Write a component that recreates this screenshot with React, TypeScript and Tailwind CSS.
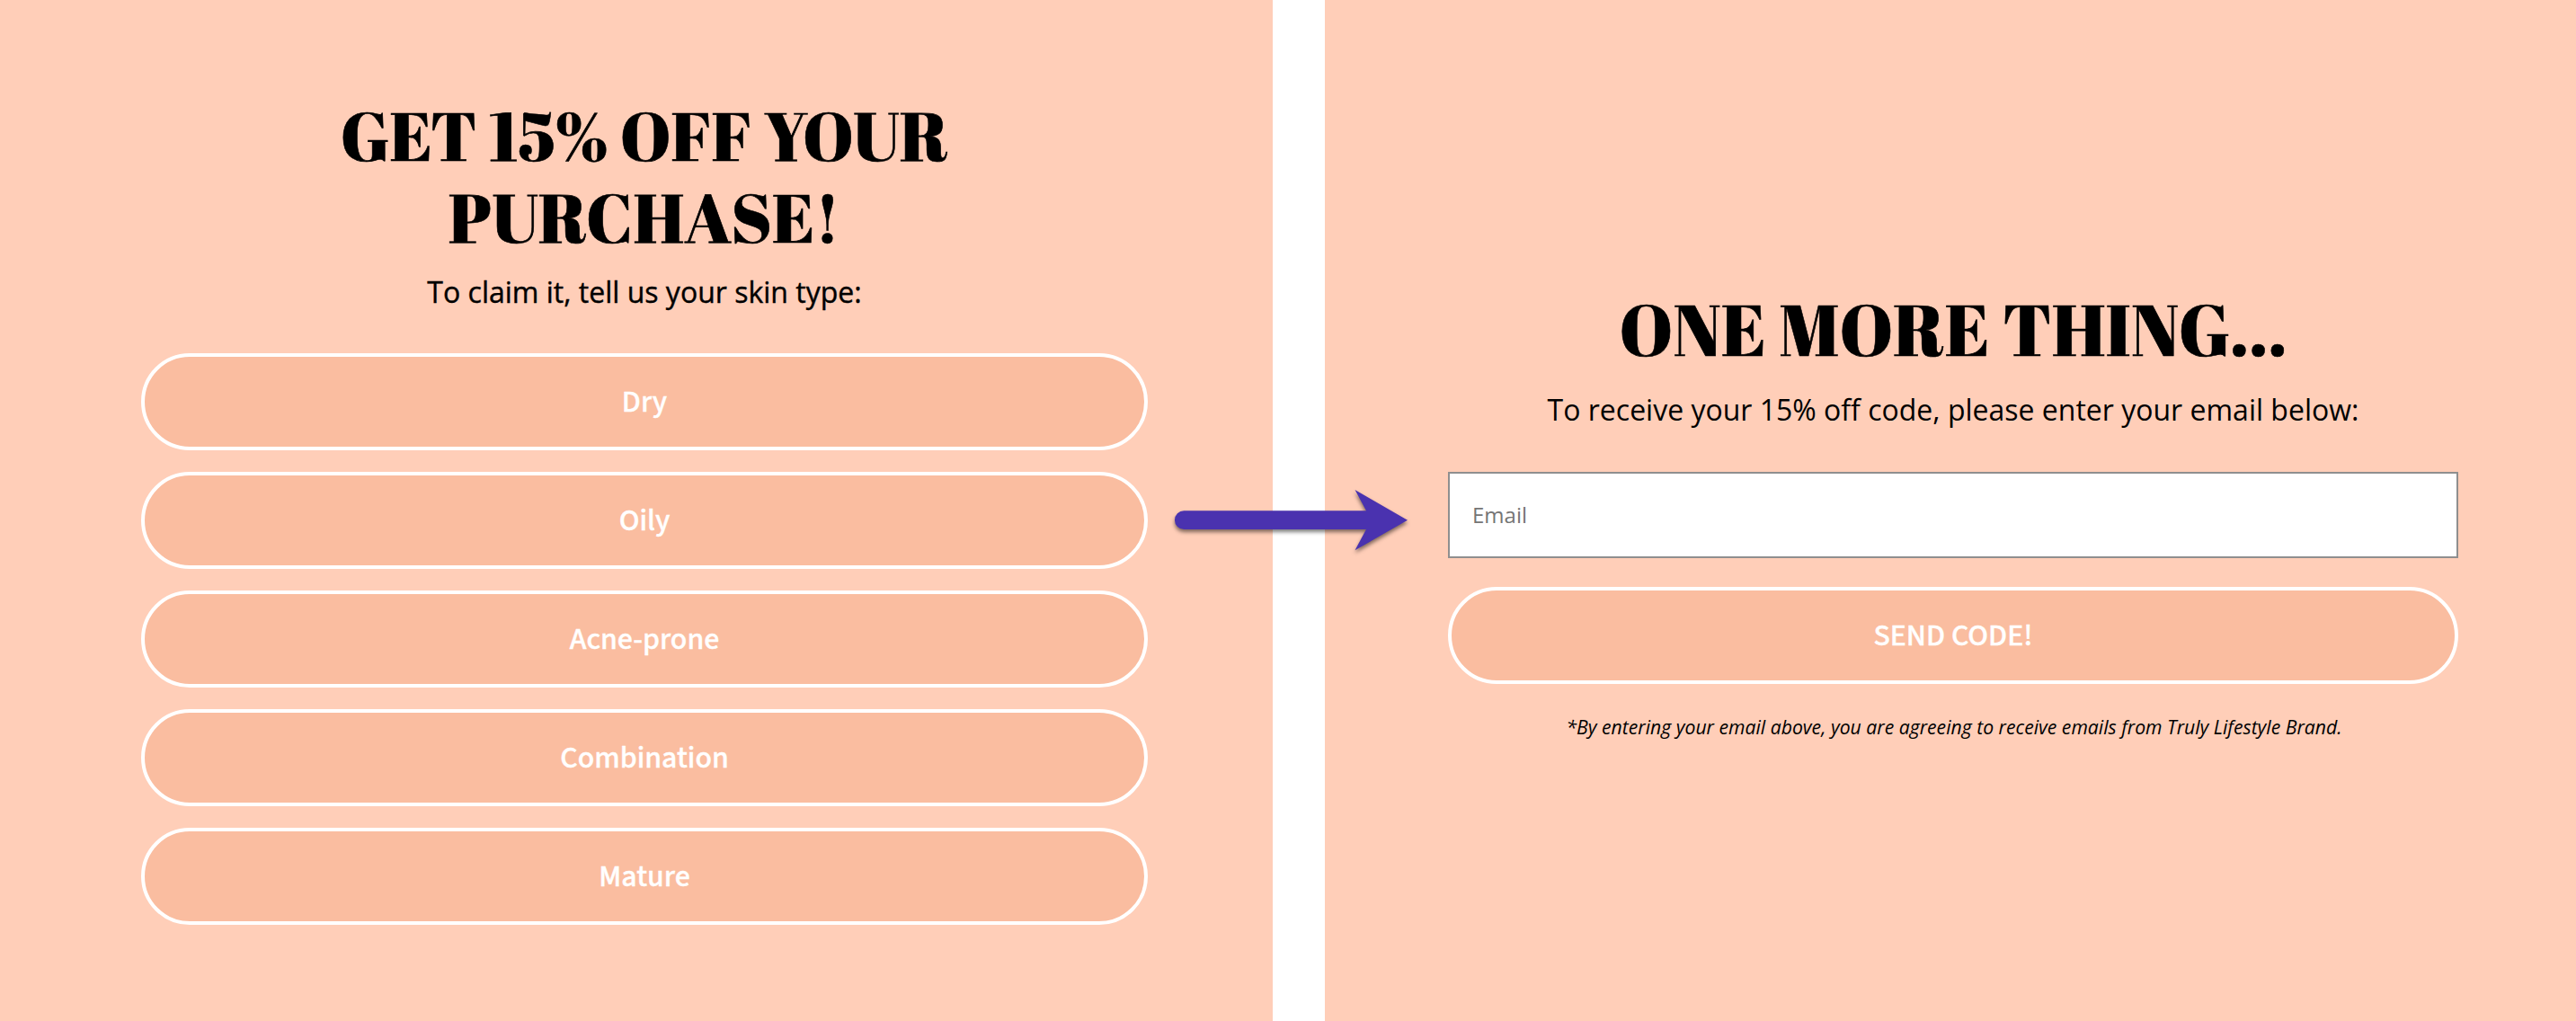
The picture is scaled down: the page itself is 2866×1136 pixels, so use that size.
const SKIN_TYPES = ["Dry", "Oily", "Acne-prone", "Combination", "Mature"];

const TITLE =
  "font-['Abril_Fatface','Liberation_Serif',serif] font-normal text-black text-center whitespace-nowrap [-webkit-text-stroke:0.6px_black]";
const PILL =
  "flex h-[108px] w-full shrink-0 items-center justify-center rounded-[54px] border-4 border-white bg-[#fabda0] pt-[2px] font-['Source_Sans_3','Noto_Sans_CJK_SC',sans-serif] text-[34px] font-medium leading-none text-white [-webkit-text-stroke:0.4px_white]";

function Arrow() {
  return (
    <svg
      className="absolute left-[1290px] top-[530px] overflow-visible drop-shadow-[0_3px_2px_rgba(0,0,0,0.5)]"
      width="300"
      height="100"
      viewBox="1290 530 300 100"
      fill="#4a32af"
      aria-hidden="true"
    >
      <path d="M1317.3 568.3H1520L1507.5 545L1566 578.7L1507.5 612.3L1520 589H1317.3A10.35 10.35 0 0 1 1317.3 568.3Z" />
    </svg>
  );
}

function SkinTypeStep() {
  return (
    <section className="flex w-[1416px] flex-col bg-[#ffceb8] pl-[157px] pr-[139px] pt-[105px]">
      <h1 className={`${TITLE} text-[76px] leading-[91px]`}>
        GET 15% OFF YOUR
        <br />
        PURCHASE!
      </h1>
      <p className="mt-4 h-11 text-center text-[32px] leading-[44px] text-black [-webkit-text-stroke:0.4px_black]">
        To claim it, tell us your skin type:
      </p>
      <div className="mt-[46px] flex flex-col gap-6">
        {SKIN_TYPES.map((type) => (
          <button key={type} className={PILL}>
            {type}
          </button>
        ))}
      </div>
    </section>
  );
}

function EmailStep() {
  return (
    <section className="flex w-[1392px] flex-col bg-[#ffceb8] pl-[137px] pr-[131px] pt-[317px]">
      <h1 className={`${TITLE} text-[80px] leading-[96px]`}>ONE MORE THING...</h1>
      <p className="mt-[21px] h-11 text-center text-[32px] leading-[44px] text-black">
        To receive your 15% off code, please enter your email below:
      </p>
      <input
        className="mt-[47px] h-24 w-full border-2 border-[#8f8f8f] bg-white pb-[2px] pl-[25px] text-[24px] placeholder:text-[#757575]"
        placeholder="Email"
      />
      <button className={`${PILL} mt-8`}>SEND CODE!</button>
      <p className="mt-[34px] pl-[2px] text-center text-[21.2px] italic leading-[28px] text-black">
        *By entering your email above, you are agreeing to receive emails from Truly Lifestyle Brand.
      </p>
    </section>
  );
}

export default function App() {
  return (
    <main className="relative flex h-[1136px] w-[2866px] justify-between overflow-hidden bg-white font-['Open_Sans',sans-serif]">
      <SkinTypeStep />
      <EmailStep />
      <Arrow />
    </main>
  );
}
